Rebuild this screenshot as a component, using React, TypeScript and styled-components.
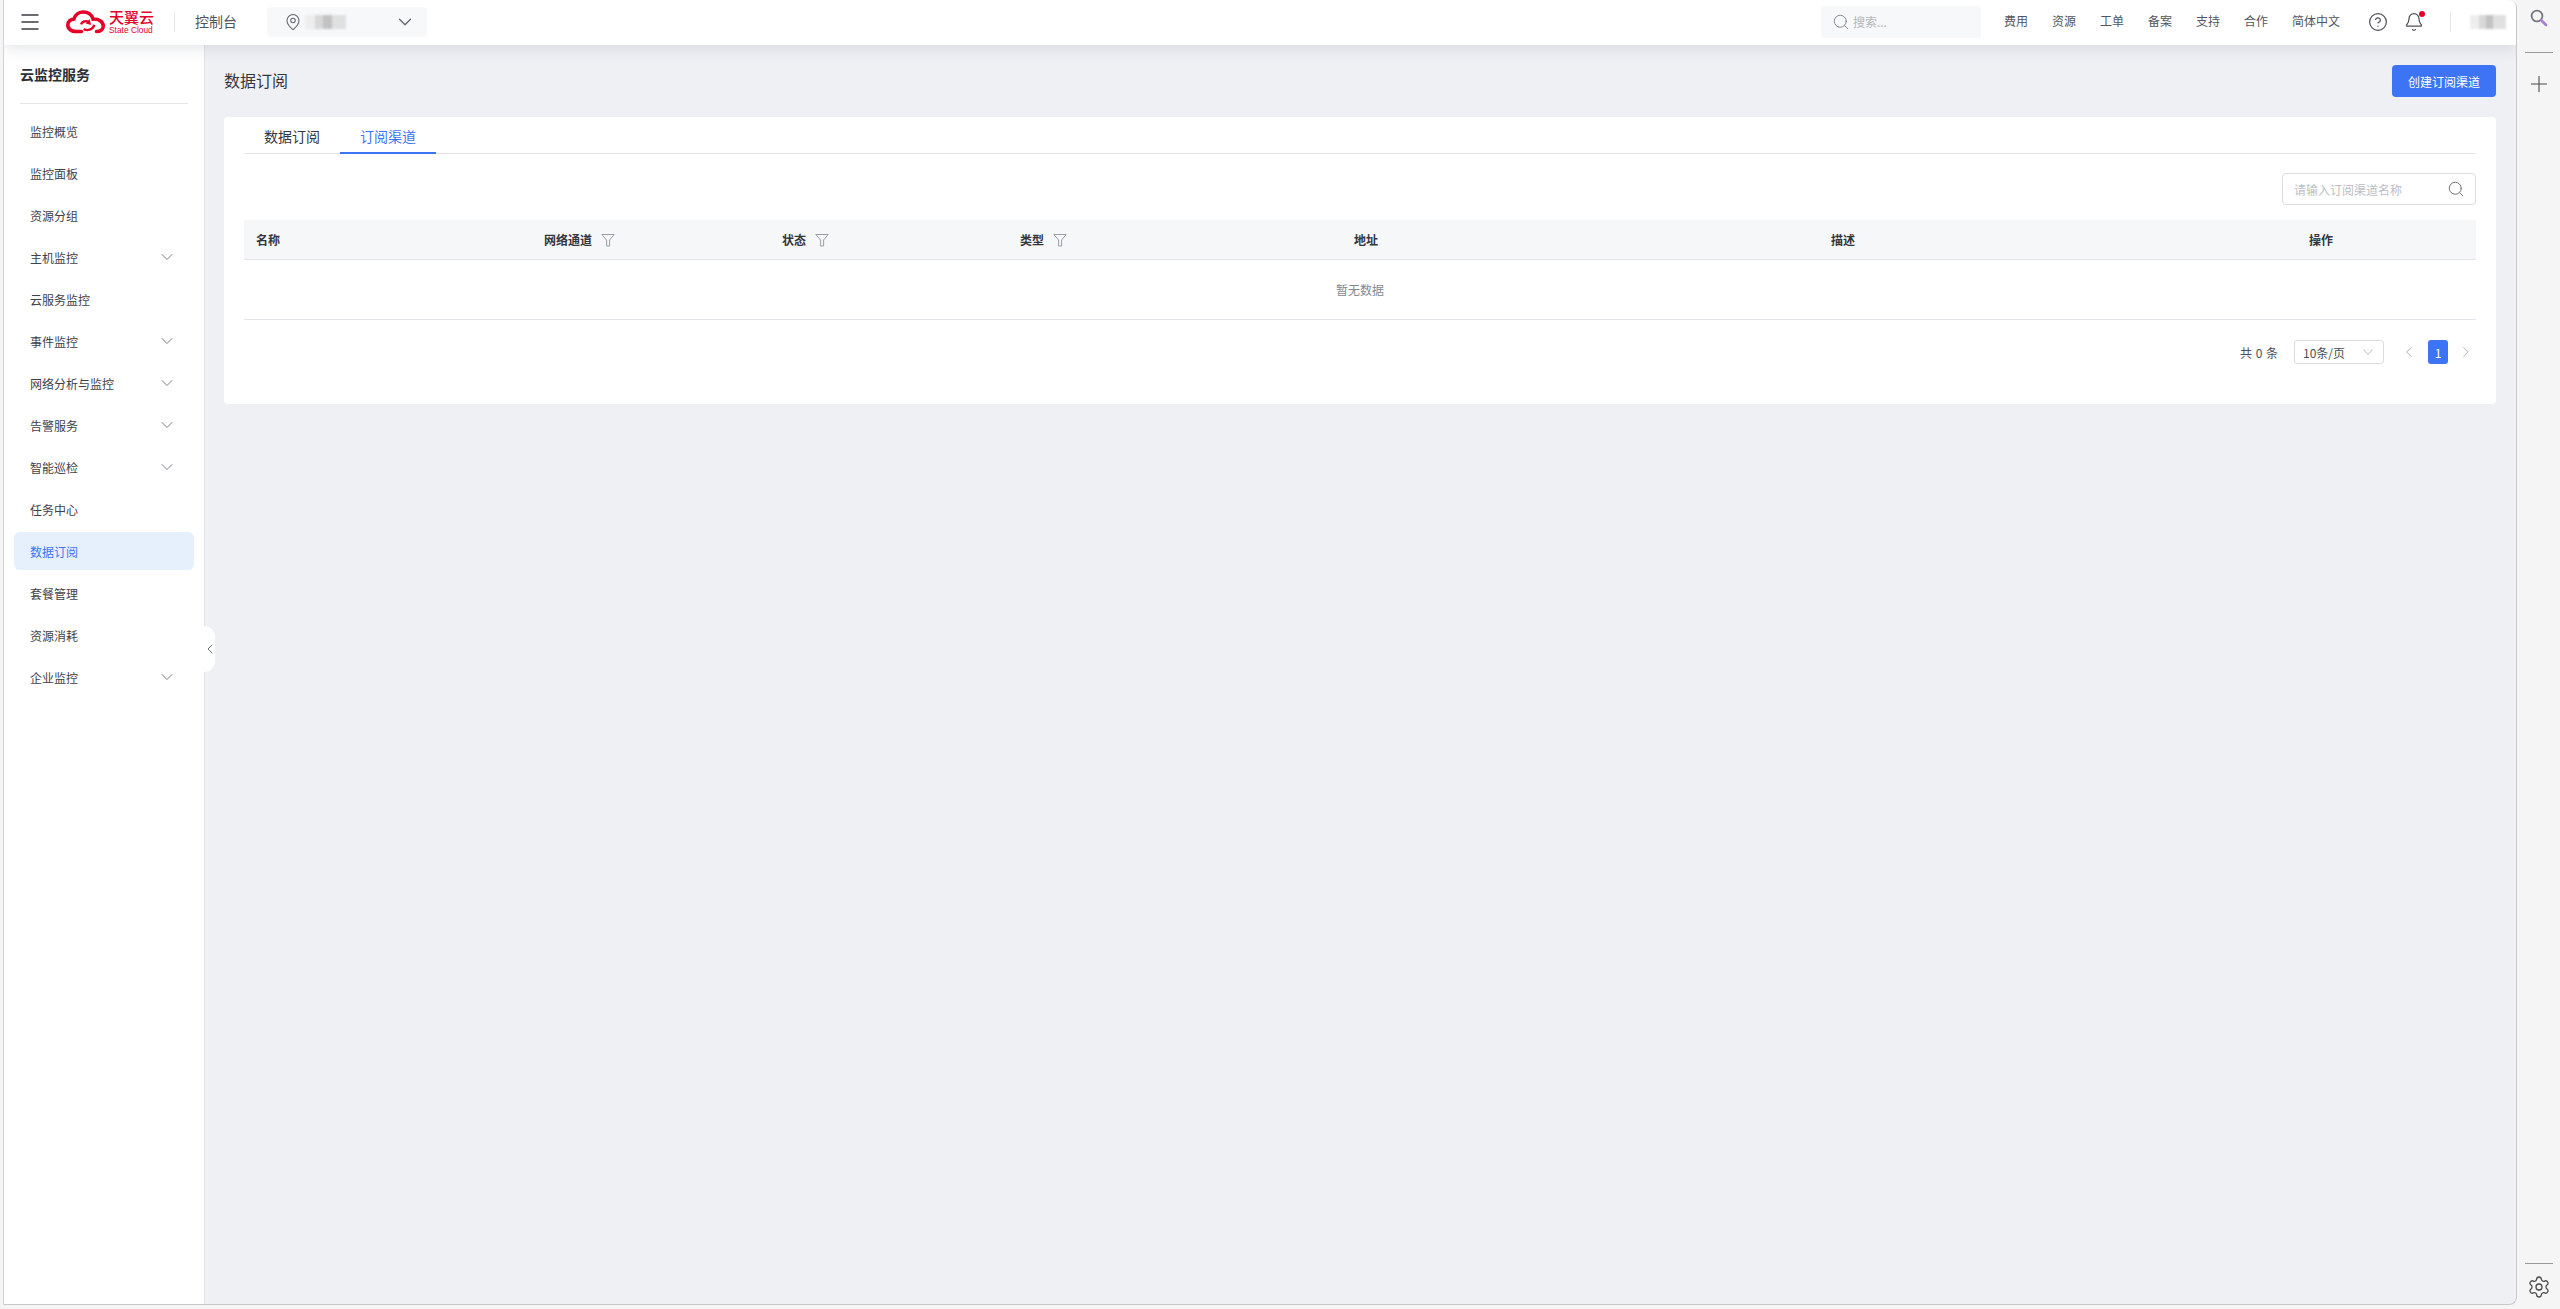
import React from 'react';
import styled, { createGlobalStyle } from 'styled-components';
import { Menu, ChevronDown, ChevronLeft, ChevronRight, Search, MapPin, Plus, Settings, CircleHelp, Bell } from 'lucide-react';

const GlobalStyle = createGlobalStyle`
  * { box-sizing: border-box; }
  html, body { margin: 0; padding: 0; height: 100%; }
  body {
    background: #f5f5f5;
    font-family: "Noto Sans CJK SC", "Noto Sans", sans-serif;
    font-size: 12px;
    color: #33363d;
    overflow: hidden;
  }
`;

const Shell = styled.div`
  display: flex;
  width: 2560px;
  height: 1309px;
  background: #f5f5f5;
`;

const Window = styled.div`
  width: 2514px;
  height: 1305px;
  flex: none;
  margin-left: 3px;
  display: flex;
  flex-direction: column;
  border-left: 1px solid #d4d4d6;
  border-right: 1px solid #c8c8ca;
  border-bottom: 1px solid #c8c8ca;
  border-bottom-right-radius: 8px;
  border-top-right-radius: 8px;
  overflow: hidden;
  background: #eff0f4;
`;

const Header = styled.header`
  position: relative;
  z-index: 2;
  height: 45px;
  flex: none;
  display: flex;
  align-items: center;
  padding-bottom: 2px;
  background: #fff;
  box-shadow: 0 3px 14px rgba(60, 70, 100, 0.14);
`;

const MenuButton = styled.div`
  width: 62px;
  padding-left: 14px;
  display: flex;
  color: #3a3d44;
`;

const LogoWrap = styled.div`
  width: 108px;
  display: flex;
  align-items: center;
`;

const LogoText = styled.div`
  display: flex;
  flex-direction: column;
  margin-left: 3px;
  color: #e60027;
  line-height: 1;
`;

const LogoCn = styled.span`
  font-size: 15px;
  font-weight: 500;
`;

const LogoEn = styled.span`
  font-family: "Liberation Sans", sans-serif;
  font-size: 8.4px;
  margin-top: 2px;
  white-space: nowrap;
`;

const VLine = styled.span`
  width: 1px;
  height: 20px;
  background: #e4e6ea;
  flex: none;
`;

const ConsoleLabel = styled.span`
  font-size: 14px;
  color: #50535a;
  margin-left: 20px;
  width: 72px;
  padding-bottom: 2px;
`;

const Region = styled.div`
  width: 160px;
  height: 30px;
  background: #f7f8fa;
  border-radius: 4px;
  display: flex;
  align-items: center;
  padding: 0 11px 0 17px;
  color: #62656c;
`;

const Blur = styled.span<{ $w: number }>`
  width: ${p => p.$w}px;
  height: 14px;
  margin-left: 3px;
  flex: none;
  background: linear-gradient(90deg, #eeeeee 0 25%, #d8d8d8 25% 45%, #c2c2c2 45% 65%, #e0e0e0 65% 100%);
  filter: blur(1px);
`;

const AvatarBlur = styled(Blur)`
  margin: 0 10px 0 19px;
`;

const Spacer = styled.div`
  flex: 1;
`;

const TopSearch = styled.div`
  width: 160px;
  height: 32px;
  background: #f7f8fa;
  border-radius: 4px;
  display: flex;
  align-items: center;
  gap: 3px;
  padding-left: 11px;
  color: #b4b7bd;
  margin-right: 23px;
`;

const NavItem = styled.span`
  color: #53565c;
  margin-right: 24px;
  white-space: nowrap;
  padding-bottom: 2px;
`;

const Actions = styled.div`
  display: flex;
  gap: 16px;
  margin: 0 26px 0 4px;
`;

const IconSlot = styled.div`
  position: relative;
  width: 20px;
  display: flex;
  color: #4d5057;
`;

const RedDot = styled.span`
  position: absolute;
  top: -1px;
  right: -1px;
  width: 6px;
  height: 6px;
  border-radius: 50%;
  background: #e60027;
`;

const Body = styled.div`
  flex: 1;
  display: flex;
  min-height: 0;
`;

const Sidebar = styled.aside`
  position: relative;
  width: 201px;
  flex: none;
  background: #fff;
  border-right: 1px solid #e2e3e7;
  padding: 0 10px;
`;

const SideTitle = styled.div`
  font-size: 14px;
  font-weight: 700;
  color: #2c2f36;
  height: 59px;
  display: flex;
  align-items: center;
  border-bottom: 1px solid #e5e6ea;
  margin: 0 6px 8px 6px;
`;

const SideItem = styled.div<{ $active?: boolean }>`
  height: 38px;
  margin-bottom: 4px;
  border-radius: 6px;
  display: flex;
  align-items: center;
  justify-content: space-between;
  padding: 0 17px 0 16px;
  color: ${p => (p.$active ? '#3d73f5' : '#3f4249')};
  background: ${p => (p.$active ? '#e6f0fd' : 'transparent')};
  svg { color: #7a7d84; }
`;

const Collapse = styled.div`
  position: absolute;
  top: 581px;
  left: 200px;
  width: 11px;
  height: 46px;
  background: #fff;
  border-radius: 0 12px 12px 0;
  display: flex;
  align-items: center;
  justify-content: center;
  color: #6c6f76;
  svg { flex: none; }
`;

const Main = styled.main`
  flex: 1;
  padding: 20px 20px 0 19px;
  min-width: 0;
`;

const PageHead = styled.div`
  height: 32px;
  display: flex;
  align-items: center;
  justify-content: space-between;
  margin-bottom: 20px;
`;

const PageTitle = styled.h1`
  margin: 0;
  padding-bottom: 3px;
  font-size: 16px;
  font-weight: 400;
  color: #33363d;
`;

const PrimaryButton = styled.button`
  width: 104px;
  height: 32px;
  border: 0;
  border-radius: 4px;
  background: #3d73f5;
  color: #fff;
  font: inherit;
  padding: 0;
`;

const Card = styled.section`
  background: #fff;
  border-radius: 4px;
  padding: 0 20px;
  height: 287px;
`;

const Tabs = styled.div`
  display: flex;
  height: 37px;
  padding-top: 6px;
  border-bottom: 1px solid #e3e4ea;
`;

const Tab = styled.div<{ $active?: boolean }>`
  width: 96px;
  height: 31px;
  display: flex;
  align-items: center;
  justify-content: center;
  padding-bottom: 3px;
  font-size: 14px;
  color: ${p => (p.$active ? '#3d73f5' : '#33363d')};
  border-bottom: 2px solid ${p => (p.$active ? '#3d73f5' : 'transparent')};
`;

const SearchRow = styled.div`
  height: 66px;
  padding-top: 4px;
  display: flex;
  justify-content: flex-end;
  align-items: center;
`;

const SearchInput = styled.div`
  width: 194px;
  height: 32px;
  border: 1px solid #dcdde3;
  border-radius: 4px;
  display: flex;
  align-items: center;
  justify-content: space-between;
  padding: 0 10px 0 11px;
  color: #bcbec4;
  svg { color: #6d7077; }
`;

const TableHead = styled.div`
  height: 40px;
  background: #f6f7f9;
  border-bottom: 1px solid #e3e4ea;
  display: grid;
  grid-template-columns: 288px 238px 238px 334px 477px 478px 179px;
`;

const HeadCell = styled.div`
  display: flex;
  align-items: center;
  gap: 9px;
  padding-left: 12px;
  font-weight: 700;
  color: #33363d;
  svg { color: #9a9da3; }
`;

const Empty = styled.div`
  height: 60px;
  border-bottom: 1px solid #e3e4ea;
  display: flex;
  align-items: center;
  justify-content: center;
  color: #84878e;
`;

const Pager = styled.div`
  display: flex;
  align-items: center;
  justify-content: flex-end;
  height: 64px;
  padding-right: 3px;
`;

const Total = styled.span`
  margin-right: 16px;
  color: #4b4e55;
  word-spacing: 1px;
`;

const PageSize = styled.div`
  width: 90px;
  height: 24px;
  border: 1px solid #dcdde3;
  border-radius: 3px;
  display: flex;
  align-items: center;
  justify-content: space-between;
  padding: 0 6px 0 8px;
  color: #4b4e55;
  margin-right: 18px;
  svg { color: #a4a7ad; }
`;

const PageArrow = styled.span`
  display: flex;
  justify-content: center;
  width: 14px;
  color: #a4a7ad;
  svg { flex: none; }
`;

const PageNumber = styled.span`
  width: 20px;
  height: 24px;
  margin: 0 11px 0 12px;
  border-radius: 3px;
  background: #3d73f5;
  color: #fff;
  display: flex;
  align-items: center;
  justify-content: center;
`;

const Rail = styled.aside`
  width: 43px;
  height: 1309px;
  flex: none;
  display: flex;
  flex-direction: column;
  align-items: center;
  padding: 9px 0 10px;
  color: #4a4a4a;
`;

const RailLine = styled.span`
  width: 28px;
  height: 1px;
  background: #9a9a9a;
  flex: none;
`;

const RailSearch = styled.div`
  height: 43px;
  flex: none;
`;

const RailPlus = styled.div`
  margin-top: 18px;
  display: flex;
`;

const RailBottom = styled.div`
  margin-top: auto;
  display: flex;
  flex-direction: column;
  align-items: center;
  gap: 11px;
`;

const menuItems = [
  { label: '监控概览' },
  { label: '监控面板' },
  { label: '资源分组' },
  { label: '主机监控', more: true },
  { label: '云服务监控' },
  { label: '事件监控', more: true },
  { label: '网络分析与监控', more: true },
  { label: '告警服务', more: true },
  { label: '智能巡检', more: true },
  { label: '任务中心' },
  { label: '数据订阅', active: true },
  { label: '套餐管理' },
  { label: '资源消耗' },
  { label: '企业监控', more: true },
];

const navItems = ['费用', '资源', '工单', '备案', '支持', '合作', '简体中文'];

const columns = [
  { label: '名称' },
  { label: '网络通道', filter: true },
  { label: '状态', filter: true },
  { label: '类型', filter: true },
  { label: '地址' },
  { label: '描述' },
  { label: '操作' },
];

const Logo = () => (
  <svg width="40" height="24" viewBox="0 0 44 26" fill="none">
    <path
      d="M11 23.5C6 23.5 2 20.6 2 16.4C2 12.6 5 10 8.6 9.8C10 5 14.4 2 19 2C24.4 2 28.6 5.4 29.8 9.8C35.6 9.4 41 12.4 41 17.4C41 21.2 37.6 23.5 33.6 23.5"
      stroke="#e60027"
      strokeWidth="4"
      strokeLinecap="round"
    />
    <path d="M11 23.5H17" stroke="#e60027" strokeWidth="4" strokeLinecap="round" />
    <path d="M16.5 15.5C17.5 12.5 22 11 25.5 13.5" stroke="#e60027" strokeWidth="2.6" />
    <path d="M31 16C30.4 20.6 24 23.6 19.5 20.8" stroke="#e60027" strokeWidth="2.6" />
    <path d="M26 9.8L27.6 16.2L21.8 14.6Z" fill="#e60027" />
  </svg>
);

const Funnel = () => (
  <svg width="14" height="14" viewBox="0 0 14 14" fill="none" stroke="currentColor" strokeWidth="1">
    <path d="M0.8 1.5H13.2L8.6 7V13H5.6V7Z" />
  </svg>
);

const RailMagnifier = () => (
  <svg width="18" height="18" viewBox="0 0 18 18" fill="none">
    <circle cx="7" cy="7" r="5.4" stroke="#77777c" strokeWidth="1.8" />
    <path d="M11 11L16 16" stroke="#a57fd8" strokeWidth="2.6" strokeLinecap="round" />
  </svg>
);

const App = () => {
  return (
    <Shell>
      <GlobalStyle />
      <Window>
        <Header>
          <MenuButton>
            <Menu size={24} strokeWidth={1.5} />
          </MenuButton>
          <LogoWrap>
            <Logo />
            <LogoText>
              <LogoCn>天翼云</LogoCn>
              <LogoEn>State Cloud</LogoEn>
            </LogoText>
          </LogoWrap>
          <VLine />
          <ConsoleLabel>控制台</ConsoleLabel>
          <Region>
            <MapPin size={18} strokeWidth={1.4} />
            <Blur $w={41} />
            <Spacer />
            <ChevronDown size={22} strokeWidth={1.4} />
          </Region>
          <Spacer />
          <TopSearch>
            <Search size={18} strokeWidth={1.3} color="#85888f" />
            <span>搜索...</span>
          </TopSearch>
          {navItems.map(item => (
            <NavItem key={item}>{item}</NavItem>
          ))}
          <Actions>
            <IconSlot>
              <CircleHelp size={20} strokeWidth={1.5} />
            </IconSlot>
            <IconSlot>
              <Bell size={20} strokeWidth={1.5} />
              <RedDot />
            </IconSlot>
          </Actions>
          <VLine />
          <AvatarBlur $w={36} />
        </Header>
        <Body>
          <Sidebar>
            <SideTitle>云监控服务</SideTitle>
            {menuItems.map(item => (
              <SideItem key={item.label} $active={item.active}>
                {item.label}
                {item.more && <ChevronDown size={20} strokeWidth={1.2} />}
              </SideItem>
            ))}
            <Collapse>
              <ChevronLeft size={16} strokeWidth={1.5} />
            </Collapse>
          </Sidebar>
          <Main>
            <PageHead>
              <PageTitle>数据订阅</PageTitle>
              <PrimaryButton>创建订阅渠道</PrimaryButton>
            </PageHead>
            <Card>
              <Tabs>
                <Tab>数据订阅</Tab>
                <Tab $active>订阅渠道</Tab>
              </Tabs>
              <SearchRow>
                <SearchInput>
                  请输入订阅渠道名称
                  <Search size={18} strokeWidth={1.3} />
                </SearchInput>
              </SearchRow>
              <TableHead>
                {columns.map(col => (
                  <HeadCell key={col.label}>
                    {col.label}
                    {col.filter && <Funnel />}
                  </HeadCell>
                ))}
              </TableHead>
              <Empty>暂无数据</Empty>
              <Pager>
                <Total>共 0 条</Total>
                <PageSize>
                  10条/页
                  <ChevronDown size={18} strokeWidth={1.1} />
                </PageSize>
                <PageArrow>
                  <ChevronLeft size={18} strokeWidth={1.2} />
                </PageArrow>
                <PageNumber>1</PageNumber>
                <PageArrow>
                  <ChevronRight size={18} strokeWidth={1.2} />
                </PageArrow>
              </Pager>
            </Card>
          </Main>
        </Body>
      </Window>
      <Rail>
        <RailSearch>
          <RailMagnifier />
        </RailSearch>
        <RailLine />
        <RailPlus>
          <Plus size={26} strokeWidth={1} />
        </RailPlus>
        <RailBottom>
          <RailLine />
          <Settings size={24} strokeWidth={1.3} />
        </RailBottom>
      </Rail>
    </Shell>
  );
};

export default App;
